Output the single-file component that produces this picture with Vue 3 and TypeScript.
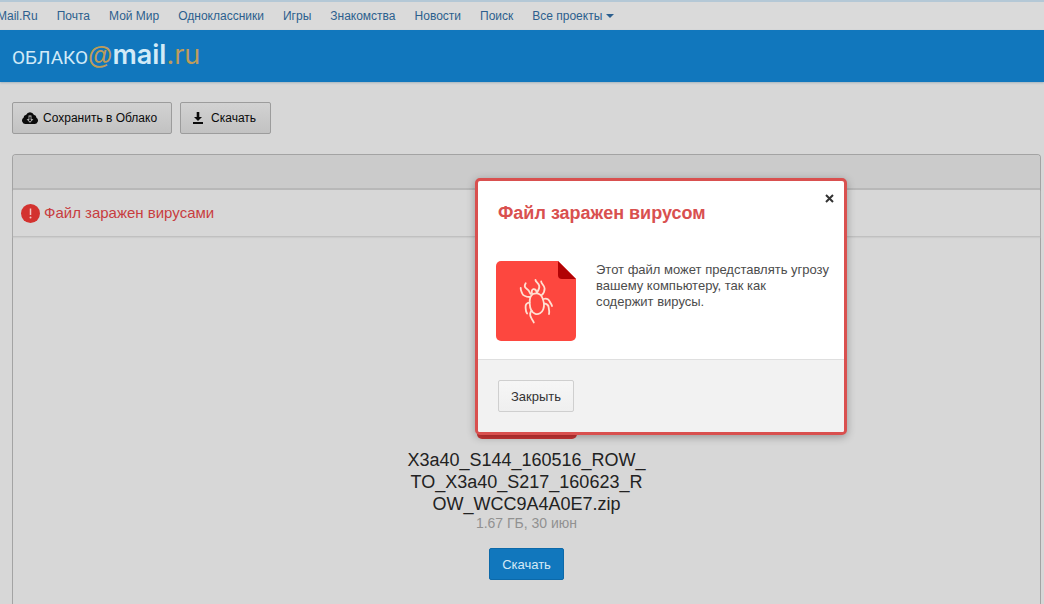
<script setup lang="ts">
import { ref } from 'vue'

const links: string[] = ['Mail.Ru', 'Почта', 'Мой Мир', 'Одноклассники', 'Игры', 'Знакомства', 'Новости', 'Поиск']
const fileLines: string[] = ['X3a40_S144_160516_ROW_', 'TO_X3a40_S217_160623_R', 'OW_WCC9A4A0E7.zip']
const dialogOpen = ref<boolean>(true)
</script>

<template>
  <div class="page">
    <nav class="portal">
      <a v-for="link in links" :key="link" href="#">{{ link }}</a>
      <a href="#" class="more">Все проекты<span class="caret"></span></a>
    </nav>

    <header class="header">
      <a href="#" class="logo">
        <span class="logo-cloud">ОБЛАКО</span><span class="logo-at">@</span><span class="logo-mail">mail</span><span class="logo-ru">.ru</span>
      </a>
    </header>

    <div class="toolbar">
      <button type="button" class="tool">
        <svg width="16" height="14" viewBox="0 0 16 14" aria-hidden="true">
          <path fill="#0a0a0a" d="M4 13A3.400 3.400 0 0 1 1.600 6.800 3 3 0 0 1 4.200 3.700 4.100 4.100 0 0 1 11.800 3.700 3 3 0 0 1 14.400 6.800 3.400 3.400 0 0 1 12 13z" />
          <path fill="#cfcfcf" d="M6.600 4.600h2.800v3.600h2L8 11.800 4.600 8.200h2z" />
          <path fill="#0a0a0a" d="M7.300 5.400h1.400v3.600h.9L8 10.700 6.400 9h.9z" />
        </svg>
        Сохранить в Облако
      </button>
      <button type="button" class="tool">
        <svg width="12" height="14" viewBox="0 0 12 14" aria-hidden="true">
          <path fill="#0a0a0a" d="M4.700 1h2.600v5H10L6 10 2 6h2.700zM1 11h10v2H1z" />
        </svg>
        Скачать
      </button>
    </div>

    <main class="panel">
      <div class="panel-head"></div>
      <div class="warning">
        <svg width="19" height="19" viewBox="0 0 19 19" aria-hidden="true">
          <circle cx="9.500" cy="9.500" r="9.500" fill="#d3322f" />
          <path d="M9.500 4.500v6.500" stroke="#f3c6c3" stroke-width="1.500" />
          <circle cx="9.500" cy="13.400" r="1" fill="#f3c6c3" />
        </svg>
        <span>Файл заражен вирусами</span>
      </div>
      <section class="file">
        <div class="file-tile"></div>
        <h1><span v-for="line in fileLines" :key="line">{{ line }}</span></h1>
        <p>1.67 ГБ, 30 июн</p>
        <button type="button" class="download">Скачать</button>
      </section>
    </main>

    <div v-if="dialogOpen" class="dialog" role="dialog" aria-labelledby="dialog-title">
      <button type="button" class="close" aria-label="Закрыть окно" @click="dialogOpen = false">
        <svg width="9" height="9" viewBox="0 0 9 9" aria-hidden="true">
          <path d="M1 1l7 7M8 1L1 8" stroke="#333" stroke-width="2" />
        </svg>
      </button>
      <h2 id="dialog-title">Файл заражен вирусом</h2>
      <div class="dialog-body">
        <svg width="80" height="80" viewBox="0 0 80 80" aria-hidden="true">
          <path fill="#fd473f" d="M5 0h57l18 18v57a5 5 0 0 1-5 5H5a5 5 0 0 1-5-5V5a5 5 0 0 1 5-5z" />
          <path fill="#b10305" d="M62 0l18 18H66a4 4 0 0 1-4-4z" />
          <g fill="none" stroke="#ffe0d2" stroke-width="1.800" stroke-linecap="round" stroke-linejoin="round">
            <path d="M37 33c3.500-1.500 7.500-.5 9 3 1.800 4 2.700 8.500 1.300 12.200-1.300 3.600-4.800 5.600-8 4.600-4-1.300-5.400-5.800-5.600-10.300-.2-4 .3-7.900 3.300-9.500z" />
            <path d="M36 32.500c-.8-2.300 0-4 1.400-4.300 1.600-.2 3 1.300 3.400 3.500" />
            <path d="M29.700 22.300c-1.400 2.200-1.300 3.800.4 5 2 1.300 3.600 2.700 4.300 5.500" />
            <path d="M24.700 27c-.2 2.300.8 3.800 1.500 5.500 1.200 2.800 3.900 3.300 7.500 3.500" />
            <path d="M39.500 19c.3 2 3 3.200 3.700 5.700.6 2.200-.4 4-1.900 6.300" />
            <path d="M45.200 20.500c-.1 2.200 3.200 3.900 3.400 6.800.2 2.700-.7 4.800-2.900 6.900" />
            <path d="M47.500 38c3-.8 5 .2 6 2.200.7 1.800 2 2.600 2.500 4.800" />
            <path d="M48 42.500c3 .2 4.500 1.500 4.700 4 .1 2.300 1 3.500.3 6.500" />
            <path d="M33.500 41.700c-3 .3-4.100 2-3.900 4.600.2 2.400-.1 4 1.500 6.200" />
            <path d="M35.800 49.500c-2.300 2.200-1.900 4.700-.7 7 .8 2 2 3 2.700 5" />
          </g>
        </svg>
        <p>Этот файл может представлять угрозу<br />вашему компьютеру, так как<br />содержит вирусы.</p>
      </div>
      <footer>
        <button type="button" @click="dialogOpen = false">Закрыть</button>
      </footer>
    </div>
  </div>
</template>

<style>
body {
  margin: 0;
  background: #d7d7d7;
}
</style>

<style scoped>
.page {
  position: relative;
  box-sizing: border-box;
  min-height: 100vh;
  display: flex;
  flex-direction: column;
  overflow: hidden;
  background: #d7d7d7;
  font-family: "Liberation Sans", Arial, sans-serif;
}

button {
  font-family: inherit;
  cursor: pointer;
}

.portal {
  display: flex;
  align-items: center;
  gap: 19px;
  height: 28px;
  margin-left: -3px;
  border-top: 2px solid #b4c8d6;
  background: #dadada;
  font-size: 12px;
  white-space: nowrap;
}

.portal a {
  color: #2c5f8e;
  text-decoration: none;
}

.more {
  display: flex;
  align-items: center;
  gap: 4px;
}

.caret {
  border: 4px solid transparent;
  border-top-color: #2c5f8e;
  border-bottom: 0;
}

.header {
  display: flex;
  align-items: center;
  height: 52px;
  padding: 0 12px;
  background: #1177bd;
  box-shadow: 0 1px 2px #a5b4bd;
}

.logo {
  display: flex;
  align-items: baseline;
  color: #d2eaf7;
  text-decoration: none;
  line-height: 32px;
}

.logo-cloud {
  font-family: Roboto, sans-serif;
  font-size: 19px;
}

.logo-at {
  color: #bd9c5b;
  font-size: 25px;
  font-weight: 700;
}

.logo-mail,
.logo-ru {
  font-family: Inter, sans-serif;
  font-size: 27px;
}

.logo-mail {
  font-weight: 600;
}

.logo-ru {
  color: #bd9c5b;
}

.toolbar {
  display: flex;
  gap: 8px;
  padding: 20px 12px;
}

.tool {
  display: flex;
  align-items: center;
  gap: 5px;
  height: 32px;
  padding: 0 14px 0 9px;
  border: 1px solid #9c9c9c;
  border-radius: 2px;
  background: linear-gradient(#d2d2d2, #c2c2c2);
  color: #0a0a0a;
  font-size: 12px;
}

.tool svg {
  min-width: 16px;
}

.panel {
  flex: 1;
  margin: 0 3px 0 12px;
  border: 1px solid #a3a3a3;
  border-bottom: 0;
  border-radius: 4px 4px 0 0;
}

.panel-head {
  height: 33px;
  border-bottom: 2px solid #b8b8b8;
  border-radius: 3px 3px 0 0;
  background: #cbcbcb;
}

.warning {
  display: flex;
  align-items: center;
  gap: 4px;
  height: 46px;
  padding-left: 8px;
  border-bottom: 1px solid #c0c0c0;
  box-shadow: 0 1px 1px #cccccc;
  color: #c83d3f;
  font-size: 15px;
}

.warning span {
  padding-bottom: 2px;
}

.file {
  display: flex;
  flex-direction: column;
  align-items: center;
  padding: 102px 0 24px;
}

.file-tile {
  width: 100px;
  height: 100px;
  border-radius: 5px;
  background: #cb3636;
}

.file h1 {
  margin: 10px 0 0;
  color: #222;
  font-size: 18px;
  font-weight: 400;
  line-height: 22px;
  text-align: center;
}

.file h1 span {
  display: block;
}

.file p {
  margin: 0;
  color: #919191;
  font-size: 14px;
  line-height: 16px;
}

.download {
  height: 32px;
  margin-top: 17px;
  padding: 0 12px;
  border: 1px solid #0c69a9;
  border-radius: 2px;
  background: #1177bd;
  color: #d4e9f6;
  font-size: 13px;
}

.dialog {
  position: absolute;
  top: 178px;
  left: calc(50% - 47px);
  box-sizing: border-box;
  width: 372px;
  border: 3px solid #d9504f;
  border-radius: 5px;
  background: #fff;
  box-shadow: 0 2px 8px #0000004d;
}

.close {
  position: absolute;
  top: 11px;
  right: 8px;
  display: flex;
  padding: 2px;
  border: 0;
  background: none;
}

.dialog h2 {
  margin: 0;
  padding: 20px 20px 0;
  color: #d9504f;
  font-size: 18px;
  line-height: 24px;
}

.dialog-body {
  display: flex;
  gap: 20px;
  padding: 36px 8px 18px 18px;
}

.dialog-body svg {
  flex: none;
}

.dialog-body p {
  margin: 1px 0 0;
  color: #4c4c4c;
  font-size: 13px;
  line-height: 16px;
}

.dialog footer {
  padding: 20px;
  border-top: 1px solid #dfdfdf;
  border-radius: 0 0 2px 2px;
  background: #f2f2f2;
}

.dialog footer button {
  display: block;
  height: 32px;
  padding: 0 12px;
  border: 1px solid #cfcfcf;
  border-radius: 2px;
  background: linear-gradient(#f6f6f6, #efefef);
  color: #333;
  font-size: 13px;
}
</style>
